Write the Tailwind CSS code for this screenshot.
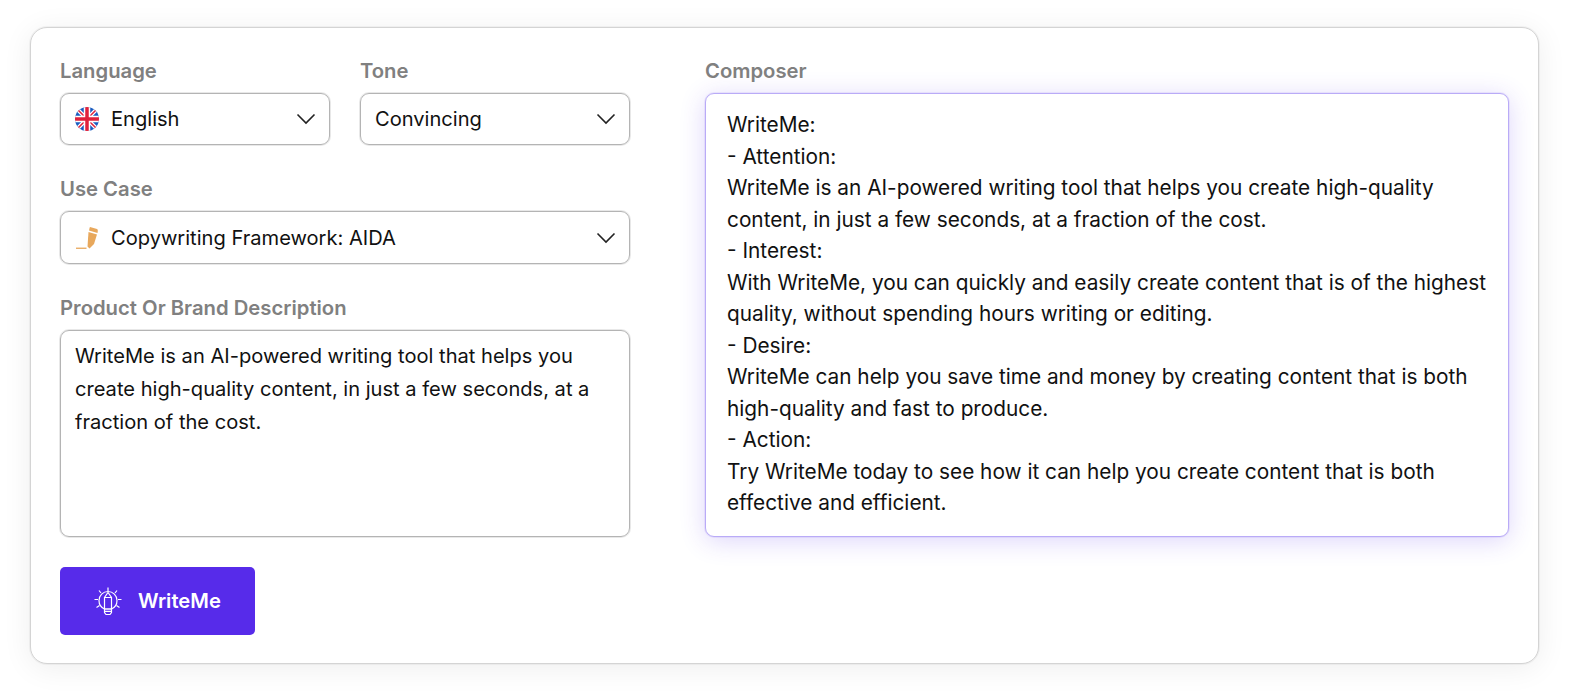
<!DOCTYPE html>
<html lang="en">
  <head>
    <meta charset="UTF-8" />
    <title>WriteMe</title>
    <script src="https://cdn.jsdelivr.net/npm/@tailwindcss/browser@4"></script>
  </head>
  <body class="bg-white font-['Inter',sans-serif] text-[#111111] antialiased">
    <div class="h-[698px] w-[1569px] overflow-hidden pt-[27px] pl-[30px]">
      <!-- Card -->
      <main class="flex h-[637px] w-[1509px] gap-[75px] rounded-[17px] border border-[#d4d4d4] bg-white pt-[28px] pl-[29px] shadow-[0_0_0_1px_rgba(0,0,0,0.04),0_4px_30px_rgba(0,0,0,0.07)]">
        <!-- Left column -->
        <section class="w-[570px]">
          <div class="flex gap-[30px]">
            <div class="w-[270px]">
              <p class="h-[37px] text-[20.250px] leading-[30px] font-semibold text-[#808080]">Language</p>
              <div class="flex h-[52px] items-center rounded-[9px] border border-[#b4b4b4] pr-[13px] pl-[14px] ring-1 ring-[#b4b4b4]/30">
                <svg class="mr-[12px] h-[24px] w-[24px] shrink-0" viewBox="0 0 24 24">
                  <defs><clipPath id="flag"><circle cx="12" cy="12" r="12" /></clipPath></defs>
                  <g clip-path="url(#flag)">
                    <rect width="24" height="24" fill="#1a5cc0" />
                    <path d="M0 0 24 24M24 0 0 24" stroke="#fff" stroke-width="4" />
                    <path d="M0 0 24 24M24 0 0 24" stroke="#e0223c" stroke-width="1.500" />
                    <path d="M12 0V24M0 12H24" stroke="#fff" stroke-width="6.500" />
                    <path d="M12 0V24M0 12H24" stroke="#e0223c" stroke-width="3.500" />
                  </g>
                </svg>
                <span class="text-[20.100px] leading-[30px]">English</span>
                <svg class="ml-auto h-[12px] w-[20px]" viewBox="0 0 20 12" fill="none" stroke="#222" stroke-width="1.600"><path d="M1.500 1.500 10 10l8.500-8.500" /></svg>
              </div>
            </div>
            <div class="w-[270px]">
              <p class="h-[37px] text-[20.250px] leading-[30px] font-semibold text-[#808080]">Tone</p>
              <div class="flex h-[52px] items-center rounded-[9px] border border-[#b4b4b4] pr-[13px] pl-[14px] ring-1 ring-[#b4b4b4]/30">
                <span class="text-[20.100px] leading-[30px]">Convincing</span>
                <svg class="ml-auto h-[12px] w-[20px]" viewBox="0 0 20 12" fill="none" stroke="#222" stroke-width="1.600"><path d="M1.500 1.500 10 10l8.500-8.500" /></svg>
              </div>
            </div>
          </div>

          <p class="mt-[29px] h-[37px] text-[20.250px] leading-[30px] font-semibold text-[#808080]">Use Case</p>
          <div class="flex h-[53px] items-center rounded-[9px] border border-[#b4b4b4] pr-[13px] pl-[14px] ring-1 ring-[#b4b4b4]/30">
            <svg class="mr-[12px] h-[24px] w-[24px] shrink-0" viewBox="0 0 24 24" fill="#e8a85c">
              <path d="M15 1 22 3C23 3.500 23 5 22.500 7L14 4.500C14.500 2.500 14.500 1.500 15 1Z" />
              <path d="M13.500 6 22 8.500 19 18 14.500 22.500 12.500 20.500Z" />
              <rect x="1" y="21.600" width="10.500" height="1.300" />
            </svg>
            <span class="text-[20.100px] leading-[30px]">Copywriting Framework: AIDA</span>
            <svg class="ml-auto h-[12px] w-[20px]" viewBox="0 0 20 12" fill="none" stroke="#222" stroke-width="1.600"><path d="M1.500 1.500 10 10l8.500-8.500" /></svg>
          </div>

          <p class="mt-[29px] h-[37px] text-[20.250px] leading-[30px] font-semibold text-[#808080]">Product Or Brand Description</p>
          <div class="h-[207px] rounded-[9px] border border-[#b4b4b4] px-[14px] py-[9px] text-[20.100px] leading-[32.900px] ring-1 ring-[#b4b4b4]/30">
            WriteMe is an AI-powered writing tool that helps you create high-quality content, in just a few seconds, at a fraction of the cost.
          </div>

          <button class="mt-[30px] flex h-[68px] w-[195px] items-center rounded-[5px] bg-[#572bea] pl-[33px] text-[20.200px] font-semibold text-white">
            <svg class="mr-[15px] h-[30px] w-[30px] shrink-0" viewBox="0 0 30 30" fill="none" stroke="#fff" stroke-width="1.200">
              <path d="M15 1.500V5M6 4.500 8 7M24 4.500 22 7M1.500 13.500H5M25 13.500H28.500M3.500 21.500 6.500 19.500M26.500 21.500 23.500 19.500" />
              <path d="M11.500 23C8 21.500 6 18 6 14.500A9 9 0 0 1 24 14.500C24 18 22 21.500 18.500 23" />
              <path d="M11.500 23V11.500L15 6.500 18.500 11.500V23ZM11.500 11.500H18.500" />
              <path d="M11.500 23H18.500V26.500L17 28.500H13L11.500 26.500ZM11.500 25.300H18.500" />
            </svg>
            WriteMe
          </button>
        </section>

        <!-- Right column -->
        <section class="w-[804px]">
          <p class="h-[37px] text-[20.250px] leading-[30px] font-semibold text-[#808080]">Composer</p>
          <div class="h-[444px] rounded-[9px] border border-[#b9abf7] bg-white pt-[15px] pr-[15px] pl-[21px] text-[20.800px] leading-[31.500px] shadow-[0_0_0_1px_rgba(87,43,234,0.08),0_4px_26px_rgba(87,43,234,0.2)]">
            <p>WriteMe:</p>
            <p>- Attention:</p>
            <p>WriteMe is an AI-powered writing tool that helps you create high-quality content, in just a few seconds, at a fraction of the cost.</p>
            <p>- Interest:</p>
            <p>With WriteMe, you can quickly and easily create content that is of the highest quality, without spending hours writing or editing.</p>
            <p>- Desire:</p>
            <p>WriteMe can help you save time and money by creating content that is both high-quality and fast to produce.</p>
            <p>- Action:</p>
            <p>Try WriteMe today to see how it can help you create content that is both effective and efficient.</p>
          </div>
        </section>
      </main>
    </div>
  </body>
</html>
